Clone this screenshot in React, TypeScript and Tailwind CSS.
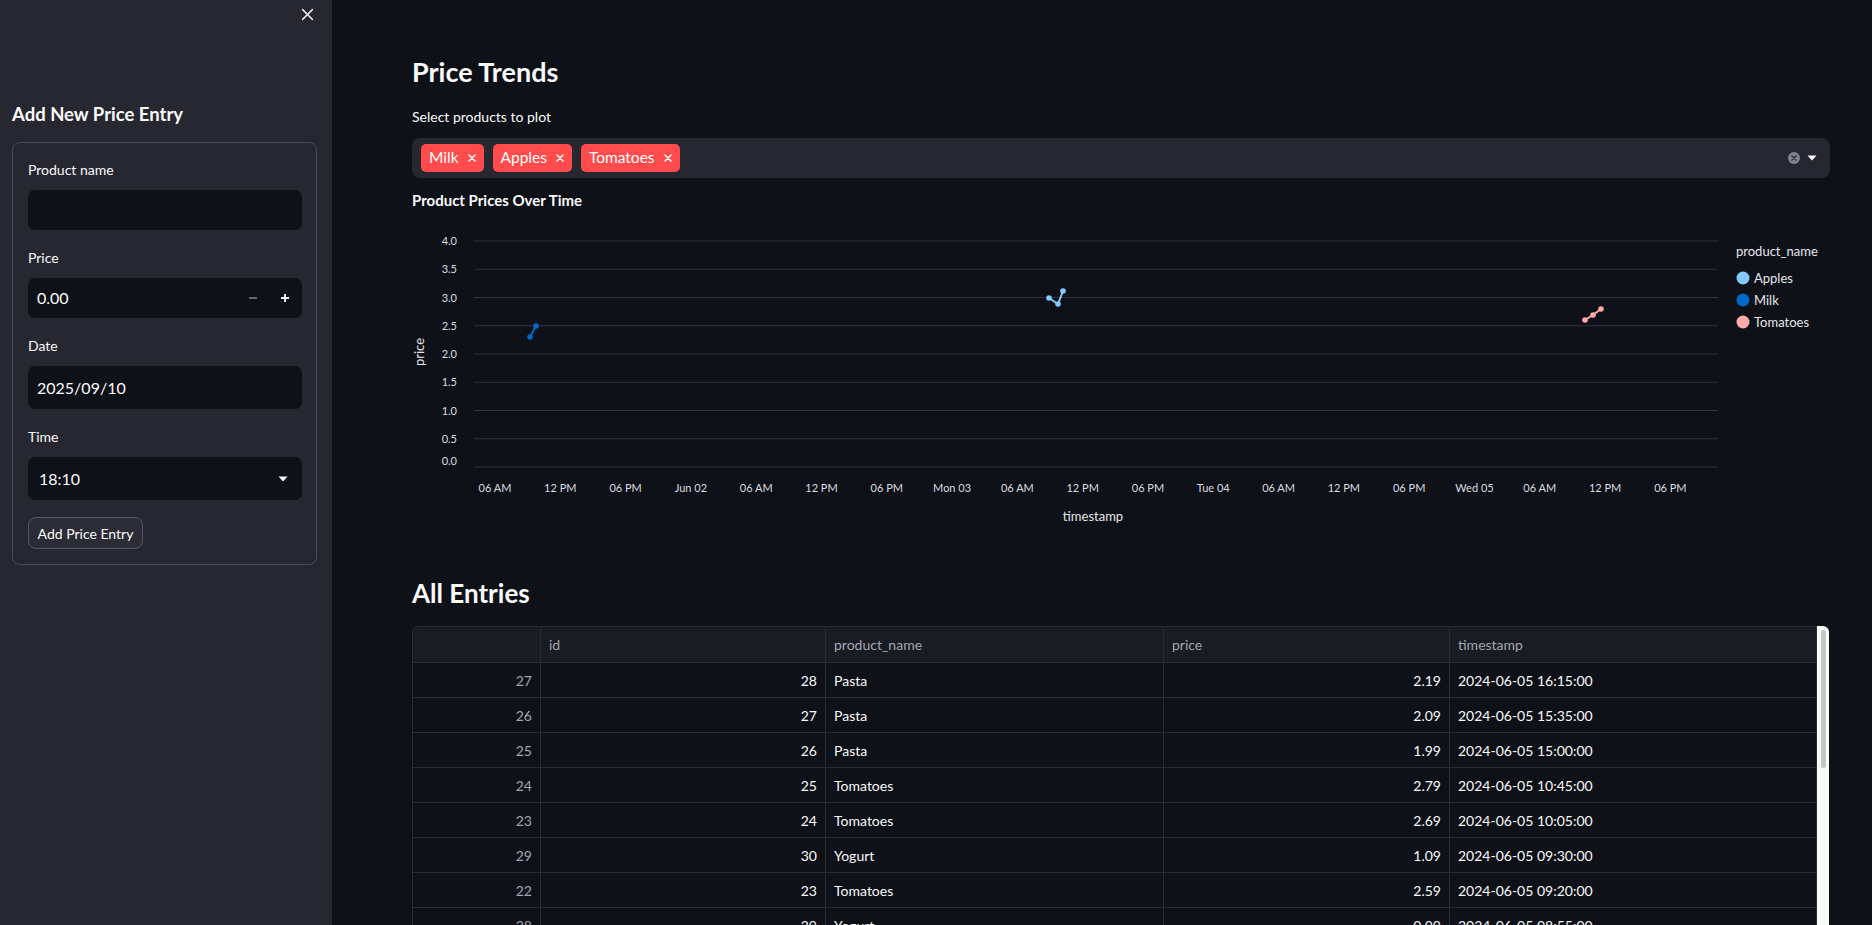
import React from 'react';

const rows = [
  [27, 28, 'Pasta', '2.19', '2024-06-05 16:15:00'],
  [26, 27, 'Pasta', '2.09', '2024-06-05 15:35:00'],
  [25, 26, 'Pasta', '1.99', '2024-06-05 15:00:00'],
  [24, 25, 'Tomatoes', '2.79', '2024-06-05 10:45:00'],
  [23, 24, 'Tomatoes', '2.69', '2024-06-05 10:05:00'],
  [29, 30, 'Yogurt', '1.09', '2024-06-05 09:30:00'],
  [22, 23, 'Tomatoes', '2.59', '2024-06-05 09:20:00'],
  [28, 29, 'Yogurt', '0.99', '2024-06-05 08:55:00'],
  [21, 22, 'Bread', '3.49', '2024-06-05 08:30:00'],
];

const xTicks = [
  '06 AM', '12 PM', '06 PM', 'Jun 02', '06 AM', '12 PM', '06 PM', 'Mon 03', '06 AM', '12 PM',
  '06 PM', 'Tue 04', '06 AM', '12 PM', '06 PM', 'Wed 05', '06 AM', '12 PM', '06 PM',
];

const yTicks = ['4.0', '3.5', '3.0', '2.5', '2.0', '1.5', '1.0', '0.5', '0.0'];

const series = [
  { name: 'Apples', color: '#83c9ff', pts: [[637, 73], [646, 79], [651, 66]] },
  { name: 'Milk', color: '#0068c9', pts: [[118, 112], [124, 101]] },
  { name: 'Tomatoes', color: '#ffabab', pts: [[1173, 95], [1181, 90], [1189, 84]] },
];

const SmallX = ({ size = 8, stroke = 1.5 }: { size?: number; stroke?: number }) => (
  <svg width={size} height={size} viewBox="0 0 8 8">
    <path d="M1 1 L7 7 M7 1 L1 7" stroke="currentColor" strokeWidth={stroke} strokeLinecap="round" />
  </svg>
);

const Caret = () => (
  <svg width="10" height="6" viewBox="0 0 10 6">
    <path d="M0.5 0.5 L9.5 0.5 L5 5.5 Z" fill="#fafafa" />
  </svg>
);

const Field = ({ label, children }: { label: string; children: React.ReactNode }) => (
  <div className="flex flex-col gap-[10px]">
    <div className="h-[20px] leading-[20px] text-[14px]">{label}</div>
    {children}
  </div>
);

const Sidebar = () => (
  <aside className="w-[332px] shrink-0 bg-[#262730] pl-3 pr-[15px] flex flex-col">
    <div className="h-[28px] shrink-0 flex items-center justify-end pr-[3px] text-[#e8e8ea]">
      <SmallX size={13} stroke={0.9} />
    </div>
    <h3 className="mt-[72px] shrink-0 h-[28px] leading-[28px] text-[18.5px] font-bold">Add New Price Entry</h3>
    <div className="mt-[14px] shrink-0 border border-[#4b4c55] rounded-lg pl-[15px] pr-[14px] pt-[17px] pb-[15px] flex flex-col gap-[18px]">
      <Field label="Product name">
        <div className="h-[40px] rounded-[7px] bg-[#0e1117]" />
      </Field>
      <Field label="Price">
        <div className="h-[40px] rounded-[7px] bg-[#0e1117] flex items-center pl-[9px] pr-[1px]">
          <span className="flex-1 text-[16px]">0.00</span>
          <span className="w-[32px] flex justify-center text-[#80838f]">
            <svg width="10" height="10" viewBox="0 0 10 10"><path d="M1 5 H9" stroke="currentColor" strokeWidth="1.5" /></svg>
          </span>
          <span className="w-[32px] flex justify-center text-[#fafafa]">
            <svg width="10" height="10" viewBox="0 0 10 10"><path d="M1 5 H9 M5 1 V9" stroke="currentColor" strokeWidth="1.8" /></svg>
          </span>
        </div>
      </Field>
      <Field label="Date">
        <div className="h-[43px] rounded-[7px] bg-[#0e1117] flex items-center pl-[9px] text-[16px]">2025/09/10</div>
      </Field>
      <Field label="Time">
        <div className="h-[43px] rounded-[7px] bg-[#0e1117] flex items-center pl-[11px] pr-[14px] text-[16px]">
          <span className="flex-1">18:10</span>
          <Caret />
        </div>
      </Field>
      <button className="self-start mt-[-1px] h-[32px] w-[115px] rounded-lg border border-[#55565f] bg-[#2b2c36] text-[14px] text-[#fafafa]">
        Add Price Entry
      </button>
    </div>
  </aside>
);

const Chart = () => {
  const top = 16;
  const step = 28.25;
  return (
    <svg width="1418" height="305" viewBox="0 0 1418 305" className="mt-[13px] shrink-0">
      {yTicks.map((t, i) => (
        <g key={t}>
          <line x1="62" x2="1306" y1={top + i * step} y2={top + i * step} stroke="#31333f" strokeWidth="1" />
          <text x="45" y={top + i * step - (i === 8 ? 6 : 0)} dy="4" textAnchor="end" fontSize="11" fill="#dcdce0">
            {t}
          </text>
        </g>
      ))}
      <text transform="translate(12 127) rotate(-90)" textAnchor="middle" fontSize="13" fill="#e6e6ea">
        price
      </text>
      {xTicks.map((t, i) => (
        <text key={i} x={83 + i * 65.3} y="267" textAnchor="middle" fontSize="11" fill="#dcdce0">
          {t}
        </text>
      ))}
      <text x="681" y="296" textAnchor="middle" fontSize="13" fill="#e6e6ea">
        timestamp
      </text>
      {series.map((s) => (
        <g key={s.name}>
          <polyline points={s.pts.map((p) => p.join(',')).join(' ')} fill="none" stroke={s.color} strokeWidth="2" />
          {s.pts.map((p, j) => (
            <circle key={j} cx={p[0]} cy={p[1]} r="2.8" fill={s.color} />
          ))}
        </g>
      ))}
      <text x="1324" y="31" fontSize="13" fill="#e6e6ea">product_name</text>
      {series.map((s, i) => (
        <g key={s.name}>
          <circle cx="1331" cy={53 + i * 22} r="6.5" fill={s.color} />
          <text x="1342" y={57.5 + i * 22} fontSize="13" fill="#e6e6ea">{s.name}</text>
        </g>
      ))}
    </svg>
  );
};

const Tag = ({ label }: { label: string }) => (
  <span className="h-[28px] rounded-[5px] bg-[#ff4b4b] pl-[8px] pr-[8px] flex items-center gap-[9px] text-[15.5px] text-white">
    {label}
    <SmallX size={8} />
  </span>
);

const cols = ['', 'id', 'product_name', 'price', 'timestamp'];

const DataTable = () => (
  <div className="mt-[15px] shrink-0 flex">
    <div className="w-[1405px] border-l border-t border-[#2a2c35] rounded-tl-md overflow-hidden text-[14px]">
      <div className="grid grid-cols-[128px_285px_338px_286px_367px] h-[36px] bg-[#1a1c24] text-[#a3a6b1]">
        {cols.map((c, i) => (
          <div key={i} className="border-r border-b border-[#2a2c35] px-[8px] flex items-center">
            {c}
          </div>
        ))}
      </div>
      {rows.map((r) => (
        <div key={r[0]} className="grid grid-cols-[128px_285px_338px_286px_367px] h-[35px]">
          <div className="border-r border-b border-[#2a2c35] px-[8px] flex items-center justify-end text-[#a3a6b1]">{r[0]}</div>
          <div className="border-r border-b border-[#2a2c35] px-[8px] flex items-center justify-end">{r[1]}</div>
          <div className="border-r border-b border-[#2a2c35] px-[8px] flex items-center">{r[2]}</div>
          <div className="border-r border-b border-[#2a2c35] px-[8px] flex items-center justify-end">{r[3]}</div>
          <div className="border-r border-b border-[#2a2c35] px-[8px] flex items-center">{r[4]}</div>
        </div>
      ))}
    </div>
    <div className="w-[12px] bg-[#fafafa] rounded-tr-md pt-[4px] pl-[4px]">
      <div className="w-[5px] h-[138px] rounded-full bg-[#c6c6c6]" />
    </div>
  </div>
);

export default function App() {
  return (
    <div className="flex h-[925px] w-full overflow-hidden bg-[#0e1117] text-[#fafafa] font-['Lato','Liberation_Sans',sans-serif]">
      <Sidebar />
      <main className="flex-1 pl-[80px] pr-[42px] flex flex-col">
        <h2 className="mt-[52px] shrink-0 h-[40px] leading-[40px] text-[27px] font-bold">Price Trends</h2>
        <div className="mt-[15px] shrink-0 h-[20px] leading-[20px] text-[14px]">Select products to plot</div>
        <div className="mt-[11px] shrink-0 h-[40px] rounded-lg bg-[#262730] flex items-center pl-[9px] pr-[13px] gap-[9px]">
          <Tag label="Milk" />
          <Tag label="Apples" />
          <Tag label="Tomatoes" />
          <div className="flex-1" />
          <span className="w-[12px] h-[12px] rounded-full bg-[#80838f] flex items-center justify-center text-[#262730]">
            <SmallX size={6} />
          </span>
          <span className="ml-[-2px]">
            <Caret />
          </span>
        </div>
        <div className="mt-[10px] shrink-0 h-[24px] leading-[24px] text-[15px] font-bold">Product Prices Over Time</div>
        <Chart />
        <h2 className="mt-[45px] shrink-0 h-[36px] leading-[36px] text-[26px] font-bold">All Entries</h2>
        <DataTable />
      </main>
    </div>
  );
}
